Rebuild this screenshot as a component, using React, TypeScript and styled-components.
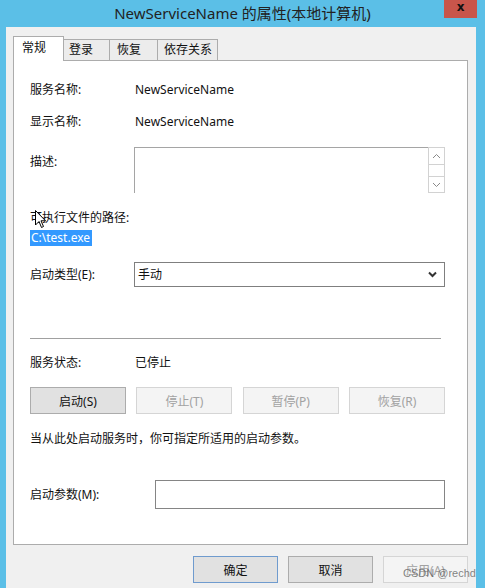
import React from 'react';
import styled, { createGlobalStyle } from 'styled-components';

const FONT = `"Noto Sans", "Noto Sans CJK SC", sans-serif`;

const Global = createGlobalStyle`
  html, body { margin: 0; padding: 0; background: #5bbfe7; }
  body { font-family: ${FONT}; -webkit-font-smoothing: antialiased; }
  * { box-sizing: border-box; }
`;

const Window = styled.div`
  position: relative;
  width: 485px;
  height: 588px;
  background: #5bbfe7;
  display: flex;
  flex-direction: column;
  overflow: hidden;
  font-family: ${FONT};
  font-size: 12px;
  color: #111;
`;

const TitleBar = styled.div`
  height: 27px;
  display: grid;
  grid-template-columns: 1fr auto 1fr;
  align-items: center;
`;

const Title = styled.div`
  font-size: 15px;
  color: #222;
  white-space: nowrap;
  line-height: 27px;
`;

const CloseButton = styled.div`
  justify-self: end;
  align-self: start;
  width: 33px;
  height: 18px;
  margin-right: 8px;
  background: #c8554b;
  color: #111;
  font-family: "DejaVu Sans", sans-serif;
  font-weight: bold;
  font-size: 12px;
  line-height: 15px;
  text-align: center;
`;

const Client = styled.div`
  flex: 1;
  margin: 0 9px 0 6px;
  background: #f0f0f0;
  padding: 9px 8px 0 7px;
  display: flex;
  flex-direction: column;
`;

const TabStrip = styled.div`
  display: flex;
  align-items: flex-end;
  height: 24px;
`;

const Tab = styled.div<{ $active?: boolean; $w: number; $pl: number }>`
  position: relative;
  z-index: ${(p) => (p.$active ? 2 : 1)};
  width: ${(p) => p.$w}px;
  height: ${(p) => (p.$active ? 25 : 21)}px;
  margin-bottom: ${(p) => (p.$active ? -1 : 0)}px;
  padding-left: ${(p) => p.$pl}px;
  border: 1px solid #acacac;
  border-bottom: none;
  border-left-width: ${(p) => (p.$active ? 1 : 0)}px;
  background: ${(p) => (p.$active ? '#fff' : '#ececec')};
  line-height: ${(p) => (p.$active ? 22 : 20)}px;
  white-space: nowrap;
`;

const Panel = styled.div`
  position: relative;
  width: 455px;
  height: 485px;
  border: 1px solid #acacac;
  background: #fff;
  padding: 0 22px 0 16px;
  display: flex;
  flex-direction: column;
`;

const FieldRow = styled.div<{ $mt: number; $col?: number; $top?: boolean }>`
  display: grid;
  grid-template-columns: ${(p) => p.$col ?? 104}px 1fr;
  align-items: ${(p) => (p.$top ? 'start' : 'center')};
  margin-top: ${(p) => p.$mt}px;
  line-height: 20px;
  min-height: 20px;
`;

const Label = styled.div<{ $pt?: number }>`
  padding-top: ${(p) => p.$pt ?? 0}px;
  white-space: nowrap;
`;

const Value = styled.div`
  padding-left: 1px;
  white-space: nowrap;
`;

const DescBox = styled.div`
  height: 46px;
  border-top: 1px solid #a5a5a5;
  border-left: 1px solid #a5a5a5;
  display: flex;
  justify-content: flex-end;
`;

const ScrollBar = styled.div`
  width: 17px;
  height: 46px;
  margin-top: -1px;
  display: flex;
  flex-direction: column;
  border-left: 1px solid #d2d2d2;
  border-right: 1px solid #d2d2d2;
`;

const ScrollBtn = styled.div<{ $h: number }>`
  height: ${(p) => p.$h}px;
  border-top: 1px solid #d2d2d2;
  border-bottom: 1px solid #d2d2d2;
  display: flex;
  align-items: center;
  justify-content: center;
`;

const ScrollTrack = styled.div`
  flex: 1;
`;

const TextLine = styled.div<{ $mt: number }>`
  margin-top: ${(p) => p.$mt}px;
  line-height: 20px;
  white-space: nowrap;
`;

const Selected = styled.span`
  display: inline-block;
  align-self: flex-start;
  margin-top: 2px;
  height: 16px;
  line-height: 16px;
  padding: 0 2px 0 1px;
  background: #3399ff;
  color: #fff;
`;

const Combo = styled.div`
  height: 25px;
  border: 1px solid #7f7f7f;
  padding: 0 7px 0 3px;
  display: flex;
  align-items: center;
  justify-content: space-between;
`;

const Separator = styled.div`
  margin: 51px 4px 0 0;
  height: 1px;
  background: #a0a0a0;
`;

const ButtonRow = styled.div`
  margin-top: 14px;
  display: flex;
  justify-content: space-between;
`;

const Button = styled.div<{ $disabled?: boolean; $default?: boolean; $w?: number }>`
  width: ${(p) => p.$w ?? 96}px;
  height: 27px;
  border: 1px solid
    ${(p) => (p.$disabled ? '#d5d5d5' : p.$default ? '#6f9bce' : '#acacac')};
  background: ${(p) => (p.$disabled ? '#f4f4f4' : '#e1e1e1')};
  color: ${(p) => (p.$disabled ? '#a2a2a2' : '#111')};
  display: flex;
  align-items: center;
  justify-content: center;
  white-space: nowrap;
`;

const Input = styled.div`
  height: 29px;
  border: 1px solid #858585;
`;

const Footer = styled.div`
  margin-top: 11px;
  display: flex;
  justify-content: flex-end;
  gap: 10px;
`;

const Cursor = styled.svg`
  position: absolute;
  left: 35px;
  top: 210px;
`;

const Watermark = styled.div`
  position: absolute;
  left: 403px;
  top: 567px;
  font-size: 11px;
  color: rgba(90, 90, 90, 0.75);
  white-space: nowrap;
  font-family: "Liberation Sans", sans-serif;
`;

const Up = () => (
  <svg width="9" height="6" viewBox="0 0 9 6">
    <path d="M1 5 L4.5 1.5 L8 5" fill="none" stroke="#8a8a8a" strokeWidth="1" />
  </svg>
);
const Down = () => (
  <svg width="9" height="6" viewBox="0 0 9 6">
    <path d="M1 1 L4.5 4.5 L8 1" fill="none" stroke="#8a8a8a" strokeWidth="1" />
  </svg>
);
const Chevron = () => (
  <svg width="9" height="7" viewBox="0 0 9 7">
    <path d="M1 1.5 L4.5 5 L8 1.5" fill="none" stroke="#333" strokeWidth="2" />
  </svg>
);

export default function App() {
  return (
    <>
      <Global />
      <Window>
        <TitleBar>
          <span />
          <Title>NewServiceName 的属性(本地计算机)</Title>
          <CloseButton>x</CloseButton>
        </TitleBar>
        <Client>
          <TabStrip>
            <Tab $active $w={51} $pl={8}>常规</Tab>
            <Tab $w={46} $pl={5}>登录</Tab>
            <Tab $w={48} $pl={7}>恢复</Tab>
            <Tab $w={60} $pl={6}>依存关系</Tab>
          </TabStrip>
          <Panel>
            <FieldRow $mt={19}>
              <Label>服务名称:</Label>
              <Value>NewServiceName</Value>
            </FieldRow>
            <FieldRow $mt={12}>
              <Label>显示名称:</Label>
              <Value>NewServiceName</Value>
            </FieldRow>
            <FieldRow $mt={15} $top>
              <Label $pt={5}>描述:</Label>
              <DescBox>
                <ScrollBar>
                  <ScrollBtn $h={18}><Up /></ScrollBtn>
                  <ScrollTrack />
                  <ScrollBtn $h={17}><Down /></ScrollBtn>
                </ScrollBar>
              </DescBox>
            </FieldRow>
            <TextLine $mt={15}>可执行文件的路径:</TextLine>
            <div>
              <Selected>C:\test.exe</Selected>
            </div>
            <FieldRow $mt={16}>
              <Label>启动类型(E):</Label>
              <Combo>
                <span>手动</span>
                <Chevron />
              </Combo>
            </FieldRow>
            <Separator />
            <FieldRow $mt={14}>
              <Label>服务状态:</Label>
              <Value>已停止</Value>
            </FieldRow>
            <ButtonRow>
              <Button>启动(S)</Button>
              <Button $disabled>停止(T)</Button>
              <Button $disabled>暂停(P)</Button>
              <Button $disabled>恢复(R)</Button>
            </ButtonRow>
            <TextLine $mt={15}>当从此处启动服务时，你可指定所适用的启动参数。</TextLine>
            <FieldRow $mt={31} $col={125}>
              <Label>启动参数(M):</Label>
              <Input />
            </FieldRow>
          </Panel>
          <Footer>
            <Button $default $w={85}>确定</Button>
            <Button $w={85}>取消</Button>
            <Button $disabled $w={85}>应用(A)</Button>
          </Footer>
        </Client>
        <Cursor width="12" height="19" viewBox="0 0 12 19">
          <path
            d="M0.5 0.5 L0.5 15 L4 11.5 L6.5 17.5 L8.5 16.5 L6 10.8 L10.5 10.8 Z"
            fill="#fff"
            stroke="#000"
            strokeWidth="1"
          />
        </Cursor>
        <Watermark>CSDN @rechd</Watermark>
      </Window>
    </>
  );
}
